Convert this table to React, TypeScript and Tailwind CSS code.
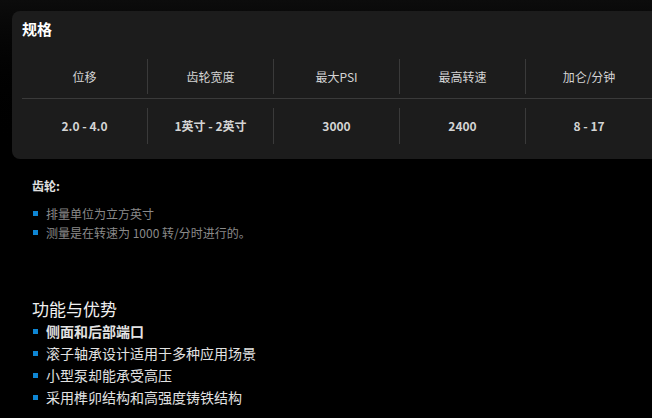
import React from 'react';

const specs = [
  { label: '位移', value: '2.0 - 4.0' },
  { label: '齿轮宽度', value: '1英寸 - 2英寸' },
  { label: '最大PSI', value: '3000' },
  { label: '最高转速', value: '2400' },
  { label: '加仑/分钟', value: '8 - 17' },
];

const gearNotes = ['排量单位为立方英寸', '测量是在转速为 1000 转/分时进行的。'];

const features = [
  { text: '侧面和后部端口', bold: true },
  { text: '滚子轴承设计适用于多种应用场景', bold: false },
  { text: '小型泵却能承受高压', bold: false },
  { text: '采用榫卯结构和高强度铸铁结构', bold: false },
];

const Bullet: React.FC = () => (
  <span className="w-[5px] h-[5px] bg-[#0e86d4] shrink-0 mr-[8px] ml-[1px]" />
);

const App: React.FC = () => {
  return (
    <div
      className="w-[652px] h-[418px] overflow-hidden bg-black text-white"
      style={{ fontFamily: '"Noto Sans CJK SC", "Noto Sans", sans-serif' }}
    >
      {/* Specs card */}
      <div className="pt-[11px] pl-[12px] bg-gradient-to-b from-[#0c0c0c] to-black">
        <div className="w-[700px] bg-[#1c1c1c] rounded-[8px] pl-[10px] pt-[8px] pb-[15px]">
          <h3 className="text-[15px] leading-[20px] font-bold text-white">规格</h3>

          <div className="mt-[20px]">
            {/* Header */}
            <div className="flex pb-[4px] border-b border-[#3a3a3a]">
              {specs.map((s, i) => (
                <div
                  key={s.label}
                  className={`w-[126px] h-[35px] flex items-center justify-center text-[12px] text-[#d4d4d4] ${i < specs.length - 1 ? 'border-r border-[#3a3a3a]' : ''}`}
                >
                  {s.label}
                </div>
              ))}
            </div>
            {/* Values */}
            <div className="flex pt-[9px]">
              {specs.map((s, i) => (
                <div
                  key={s.label}
                  className={`w-[126px] h-[36px] flex items-center justify-center text-[12px] font-bold text-[#d4d4d4] ${i < specs.length - 1 ? 'border-r border-[#3a3a3a]' : ''}`}
                >
                  {s.value}
                </div>
              ))}
            </div>
          </div>
        </div>
      </div>

      {/* Gear notes */}
      <div className="pl-[32px] pt-[17px]">
        <div className="text-[12px] leading-[20px] font-bold text-[#e0e0e0]">齿轮:</div>
        <ul className="mt-[8px]">
          {gearNotes.map((n) => (
            <li key={n} className="flex items-center text-[12px] leading-[19px] text-[#8a8a8a]">
              <Bullet />
              <span>{n}</span>
            </li>
          ))}
        </ul>
      </div>

      {/* Features */}
      <div className="pl-[32px] pt-[56px]">
        <h3 className="text-[17px] leading-[22px] text-[#f0f0f0]">功能与优势</h3>
        <ul>
          {features.map((f) => (
            <li
              key={f.text}
              className={`flex items-center text-[14px] leading-[22px] text-[#e2e2e2] ${f.bold ? 'font-semibold' : ''}`}
            >
              <Bullet />
              <span>{f.text}</span>
            </li>
          ))}
        </ul>
      </div>
    </div>
  );
};

export default App;
